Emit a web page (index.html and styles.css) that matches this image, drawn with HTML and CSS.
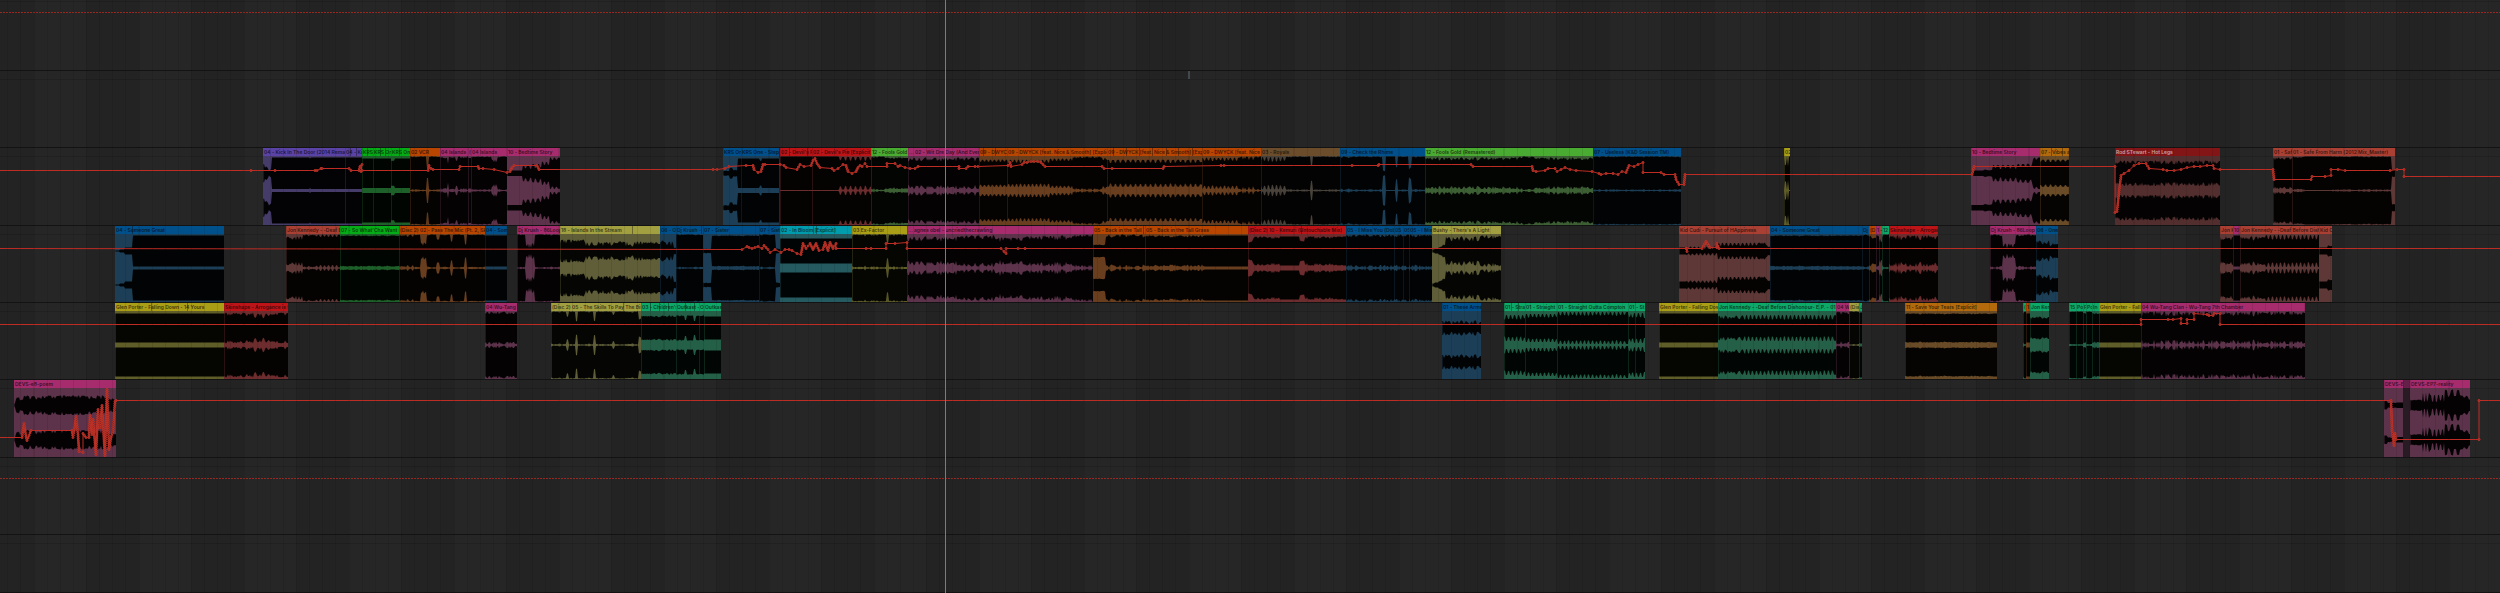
FILE: index.html
```html
<!DOCTYPE html>
<html lang="en">
<head>
    <meta charset="UTF-8">
    <title>Arrangement</title>
    <link rel="stylesheet" href="styles.css">
</head>
<body>

    <main class="arrangement" id="arrangement"></main>

    <script src="script.js"></script>

</body>
</html>
```

FILE: styles.css
```css
body {
    margin: 0;
    background-color: #262626;
    font-family: Inter, "Liberation Sans", sans-serif;
    overflow: hidden;
}

.arrangement {
    position: relative;
    display: flex;
    flex-direction: column;
    min-height: 100vh;
    background-image: linear-gradient(90deg, #232323 50%, #262626 50%);
    background-size: 105px 100%;
    background-position: 86px 0;
}

/* beat lines, drawn over lanes and clips */
.arrangement::after {
    content: "";
    position: absolute;
    inset: 0;
    background-image: repeating-linear-gradient(90deg, rgba(0, 0, 0, 0.09) 0 1px, transparent 1px 12.5%);
    background-size: 105px 100%;
    background-position: 86px 0;
    pointer-events: none;
}

.lane {
    position: relative;
    box-sizing: border-box;
    height: 77px;
    border-bottom: 1px solid #131313;
    background-image: linear-gradient(rgba(0, 0, 0, 0.14), rgba(0, 0, 0, 0.14));
    background-size: 100% 1px;
    background-position: 0 8px;
    background-repeat: no-repeat;
}

.lane.top {
    height: 71px;
    background-position: 0 1px;
}

.lane.main {
    height: 78px;
}

.lane.last {
    height: 58px;
}

.clip {
    position: absolute;
    top: 0;
    bottom: 0;
    display: flex;
    flex-direction: column;
    overflow: hidden;
}

.clip-name {
    position: relative;
    height: 8px;
    padding-left: 1px;
    background-color: var(--head);
    color: rgba(0, 0, 0, 0.68);
    font-size: 5px;
    font-weight: 600;
    line-height: 8px;
    white-space: nowrap;
    overflow: hidden;
}

.clip + .clip .clip-name {
    box-shadow: inset 1px 0 rgba(0, 0, 0, 0.12);
}

.slice {
    position: absolute;
    top: 0;
    width: 1px;
    height: 8px;
    background-color: rgba(0, 0, 0, 0.35);
}

.clip-wave {
    display: block;
    width: 100%;
    flex: 1;
    min-height: 0;
    background-color: var(--wave);
}

.clip-wave path {
    fill: #000;
    fill-opacity: 0.95;
}

.clip-edge {
    position: absolute;
    top: 8px;
    bottom: 0;
    left: 0;
    width: 1px;
    background-color: var(--wave);
    opacity: 0.35;
}

.violet { --head: #5a43a5; --wave: #453c69; }
.green { --head: #06ac17; --wave: #1e6029; }
.lime { --head: #4aab33; --wave: #3d5f34; }
.orange { --head: #b84500; --wave: #683e1e; }
.magenta { --head: #a62c6e; --wave: #5d334b; }
.blue { --head: #00508c; --wave: #1c3f57; }
.red { --head: #bd1418; --wave: #6d2c2d; }
.brown { --head: #6c4d2b; --wave: #49423a; }
.yellow { --head: #aa9e16; --wave: #5f5d28; }
.khaki { --head: #a29f40; --wave: #5f5e38; }
.teal { --head: #0ea868; --wave: #236047; }
.cyan { --head: #009cae; --wave: #245a60; }
.salmon { --head: #aa4033; --wave: #5e3836; }
.amber { --head: #b36a0c; --wave: #694b27; }
.crimson { --head: #841517; --wave: #532e2e; }
.dim { --head: #65204a; --wave: #281b23; }

.crimson .clip-name {
    color: #c9a3a0;
}

.automation {
    position: absolute;
    top: 0;
    left: 0;
    width: 100%;
    height: 77px;
    overflow: visible;
}

.automation path {
    fill: none;
    stroke: #bf2c24;
    stroke-width: 1;
}

.automation circle {
    fill: #8a251d;
    stroke: #c63429;
    stroke-width: 1;
}

.automation.off path {
    stroke: #962a23;
    stroke-dasharray: 2 1;
}

.playhead {
    position: absolute;
    top: 0;
    bottom: 0;
    width: 1px;
    background-color: #7c7c7c;
    z-index: 1;
}

.insert-marker {
    position: absolute;
    top: 0;
    width: 2px;
    height: 8px;
    background-color: #465156;
}
```

FILE: script.js
```js
const SPAN = 2500;
const WAVE_HEIGHT = 68;

// clip: [start, end, colour, name, wave, slices]
// wave: "x:gap:jitter:period" steps, gap is the room left outside the peaks
const lanes = [
    { type: 'top', off: true, line: '0,12 2500,12' },
    { type: '', marker: 1188 },
    {
        type: 'main',
        line: '0,22 251,22 275,22 315,22 317,22 321,20 322,20 349,20 351,22 359,22 360,18 362,16 361,23 362,22 428,22 429,17 431,20 433,21 459,21 460,18 478,18 479,20 483,20 494,21 507,24 510,23 512,19 514,17 537,17 539,21 713,21 717,21 725,20 729,18 746,17 753,17 754,21 758,24 761,23 763,16 765,16 780,16 784,17 786,19 797,21 800,16 804,18 811,17 813,12 815,10 817,15 820,19 832,20 834,22 838,20 843,16 846,17 848,23 852,25 856,23 858,19 860,17 862,18 865,15 867,18 887,18 887,15 895,15 898,18 900,17 905,19 910,20 915,20 918,18 959,18 959,20 966,20 968,18 975,18 978,18 1008,17 1010,14 1011,18 1022,16 1024,14 1027,14 1031,13 1034,13 1038,13 1041,14 1045,18 1102,18 1104,20 1112,20 1163,20 1164,18 1221,17 1224,17 1352,17 1378,17 1379,16 1471,16 1473,18 1532,18 1533,22 1536,23 1545,22 1548,20 1555,20 1557,23 1561,21 1565,19 1570,21 1576,22 1592,23 1599,25 1601,26 1606,25 1613,25 1618,26 1622,23 1626,24 1629,17 1634,18 1638,16 1643,14 1643,24 1661,24 1664,26 1675,26 1676,31 1679,36 1684,36 1685,26 1972,26 1974,18 2115,18 2115,64 2117,63 2119,44 2121,27 2124,25 2129,22 2134,17 2139,15 2146,15 2149,20 2163,21 2167,22 2174,22 2181,21 2187,19 2194,18 2200,18 2207,17 2213,17 2214,20 2220,21 2273,21 2274,31 2311,31 2312,28 2325,28 2331,27 2331,21 2338,21 2345,22 2390,22 2397,21 2404,21 2404,28 2500,28',
        clips: [
            [263, 345, 'violet', '04 - Kick In The Door (2014 Remaster)', '263:5:3 265:10:4 269:12:5 272:1:0 310:2:0 311:1:0'],
            [345, 362, 'violet', '04 - Kick', '345:1:0', [350, 356]],
            [362, 373, 'green', 'KRS', '362:2:0', [367]],
            [373, 391, 'green', 'KRS One', '373:2:0', [380, 385]],
            [391, 410, 'green', 'KRS One', '391:4:3 395:2:0', [399]],
            [410, 440, 'orange', '02 VCR', '410:0:1 427:11:1 429:0:1'],
            [440, 468, 'magenta', '04 Islands', '440:0:2 448:7:1 449:0:2 456:4:1 458:0:2'],
            [468, 471, 'magenta', '(', '468:1:1'],
            [471, 507, 'magenta', '04 Islands', '471:0:1 492:2:4 498:0:1'],
            [507, 560, 'magenta', '10 - Bedtime Story', '507:14:0 523:8:5:5 533:7:5:5 542:5:4:4 550:1:3:4'],
            [723, 741, 'blue', 'KRS One', '723:14:1 730:11:1 733:13:1 738:2:0'],
            [741, 779, 'blue', 'KRS One - Step', '741:2:0 760:4:1 762:2:0'],
            [780, 812, 'red', "02 - Devil's P", '780:0:0', [789, 807]],
            [812, 871, 'red', "02 - Devil's Pie [Explicit]", '812:0:0 839:0:5:5'],
            [871, 908, 'lime', '12 - Fools Gold', '871:0:2 885:1:2'],
            [908, 979, 'magenta', '... 02 - Wit Dre Day (And Everybody)', '908:1:4', [945]],
            [979, 1007, 'orange', '09 - DWYCK', '979:3:3:4', [983, 995]],
            [1007, 1107, 'orange', '09 - DWYCK [feat. Nice & Smooth] [Explicit]', '1007:3:4:4 1050:2:3:4 1073:0:2 1103:1:3'],
            [1107, 1202, 'orange', '09 - DWYCK [feat. Nice & Smooth] [Exp', '1107:3:4:5', [1113, 1126, 1139, 1152, 1166, 1178, 1192]],
            [1202, 1261, 'orange', '09 - DWYCK [feat. Nice &', '1202:1:4:4 1240:0:4 1255:0:2'],
            [1261, 1340, 'brown', '03 - Royals', '1261:0:6:4 1287:0:1 1311:9:1 1313:0:1'],
            [1340, 1425, 'blue', '09 - Check the Rhime', '1340:0:2 1350:0:1 1383:13:2 1386:0:0 1396:9:2 1398:0:1 1409:11:2 1412:0:1'],
            [1425, 1593, 'lime', '12 - Fools Gold (Remastered)', '1425:1:3 1520:0:2 1535:1:3'],
            [1593, 1681, 'blue', '07 - Useless (K&D Session TM)', '1593:0:1'],
            [1784, 1790, 'yellow', '02', '1784:0:0 1785:8:2 1787:0:0 1788:8:2 1789:0:0'],
            [1971, 2040, 'magenta', '10 - Bedtime Story', '1971:14:0 1984:13:1 1993:8:5:5 2018:7:4:5 2033:1:3:4'],
            [2040, 2069, 'amber', '07 - Vibes a', '2040:3:3:5', [2051, 2062]],
            [2115, 2220, 'crimson', 'Rod STewart - Hot Legs', '2115:4:4'],
            [2273, 2292, 'salmon', '01 - Saf', '2273:1:3'],
            [2292, 2395, 'salmon', '01 - Safe From Harm (2012 Mix_Master)', '2292:0:2 2305:0:0 2333:0:1 2392:13:1']
        ]
    },
    {
        type: '',
        line: '0,22 742,23 747,20 749,21 752,22 755,21 758,20 762,22 764,19 768,23 770,26 775,23 781,26 785,23 789,23 792,24 797,27 801,28 803,17 806,22 810,17 813,23 816,17 819,24 823,23 825,16 828,24 830,16 833,22 836,17 836,22 866,22 871,22 886,22 886,17 895,17 907,16 907,22 1001,22 1004,25 1006,27 1006,22 1018,22 1025,22 1686,22 1687,25 1687,22 1702,22 1706,15 1710,21 1717,21 1717,17 1719,22 2500,22',
        clips: [
            [115, 224, 'blue', '04 - Someone Great', '115:16:0 120:15:0 125:13:0 133:1:0', [132]],
            [286, 340, 'salmon', 'Jon Kennedy - -Deaf B', '286:2:4 303:0:2 315:0:3:4'],
            [340, 399, 'green', "07 - So What'Cha Want (", '340:1:1'],
            [399, 485, 'orange', '(Disc 2) 02 - Pass The Mic (Pt. 2, Skills)', '399:0:3 414:0:1 421:8:5 427:0:1 437:4:2 440:0:1 451:6:2 453:0:1 465:9:2 467:0:1'],
            [485, 507, 'blue', '04 - Som', '485:1:0'],
            [517, 560, 'magenta', 'Dj Krush - 86Loop', '517:0:1 526:9:5 535:0:1'],
            [560, 660, 'khaki', '18 - Islands In the Stream', '560:5:4 585:7:5 645:7:3', [632]],
            [660, 676, 'blue', '06 - O', '660:6:3 665:7:5 674:12:2'],
            [676, 703, 'blue', 'Dj Krush - ', '676:0:1', [701]],
            [703, 759, 'blue', '07 - Sister', '703:14:1 712:1:1'],
            [759, 780, 'blue', '07 - Sist', '759:0:1 776:14:1'],
            [780, 852, 'cyan', '02 - In Bloom [Explicit]', '780:4:0', [813, 816]],
            [852, 907, 'yellow', '03 Ex-Factor', '852:0:2 887:9:2 889:0:2'],
            [907, 1093, 'magenta', '... agnes obel - uncriedthecrawling', '907:2:5 960:1:4 995:3:5 1025:1:5 1073:0:3', [945]],
            [1093, 1145, 'orange', '05 - Back in the Tall', '1093:10:1 1106:0:3', [1143]],
            [1145, 1248, 'orange', '05 - Back in the Tall Grass', '1145:1:2 1205:1:0'],
            [1248, 1346, 'red', '(Disc 2) 10 - Kemuri (Untouchable Mix)', '1248:7:2 1253:2:3 1280:2:0 1300:6:2 1305:2:3 1333:2:1', [1301]],
            [1346, 1394, 'blue', '05 - I Miss You (Dob', '1346:0:3'],
            [1394, 1403, 'blue', '05', '1394:0:3'],
            [1403, 1409, 'blue', '05', '1403:0:3'],
            [1409, 1432, 'blue', '05 - I Mis', '1409:0:3'],
            [1432, 1501, 'khaki', "Bushy - Thers's A Light", '1432:15:0 1435:14:0 1439:12:1 1443:10:1 1446:2:5 1480:1:4'],
            [1679, 1770, 'salmon', 'Kid Cudi - Pursuit of HAppiness', '1679:13:0 1687:12:3:4 1718:8:4:4 1760:8:4 1768:12:1'],
            [1770, 1862, 'blue', '04 - Someone Great', '1770:1:1'],
            [1862, 1869, 'blue', 'Dj', '1862:0:2'],
            [1869, 1876, 'orange', '(D', '1869:1:4'],
            [1876, 1879, 'magenta', '1', '1876:0:2'],
            [1879, 1882, 'salmon', '-', '1879:4:4'],
            [1882, 1889, 'teal', '12', '1882:0:3'],
            [1889, 1938, 'red', 'Skinshape - Arrogar', '1889:1:5'],
            [1990, 2036, 'magenta', 'Dj Krush - 86Loop', '1990:0:2 2003:9:5 2016:0:2'],
            [2036, 2058, 'blue', '06 - One', '2036:6:5 2050:8:5'],
            [2220, 2233, 'salmon', 'Jon K', '2220:2:5'],
            [2233, 2240, 'magenta', '10', '2233:1:0'],
            [2240, 2319, 'salmon', 'Jon Kennedy - -Deaf Before Dish', '2240:2:4 2266:0:6:4'],
            [2319, 2332, 'salmon', 'Kid C', '2319:13:0 2328:11:1']
        ]
    },
    {
        type: '',
        line: '0,21 2141,21 2141,16 2168,16 2173,16 2181,15 2181,20 2187,20 2187,16 2194,16 2194,10 2207,11 2209,12 2213,12 2214,10 2220,10 2220,21 2500,21',
        clips: [
            [115, 224, 'yellow', 'Glen Porter - Falling Down - 14 Yours', '115:2:0', [151, 187]],
            [224, 288, 'red', 'Skinshape - Arrogance is t', '224:1:4 255:2:5 275:1:4'],
            [485, 517, 'magenta', '04 Wu-Tang', '485:0:3'],
            [551, 641, 'khaki', '(Disc 2) 05 - The Skills To Pay The Bills', '551:0:1 567:5:1 569:0:1 576:9:2 578:0:1 594:7:3 596:0:1 613:3:1 615:0:1 639:7:2', [623]],
            [641, 676, 'teal', "03 - Children's", '641:4:2', [650, 659, 668]],
            [676, 699, 'teal', 'Outkast - ', '676:4:1 685:8:2 687:4:1 694:9:1 696:4:1', [685, 694]],
            [699, 704, 'teal', 'O', '699:4:1'],
            [704, 721, 'teal', 'Outkas', '704:5:0'],
            [1442, 1481, 'blue', '01 - These Arms', '1442:9:4'],
            [1504, 1525, 'teal', '01 - Stra', '1504:3:6:4', [1511, 1518]],
            [1525, 1557, 'teal', '01 - Straight', '1525:2:5:4'],
            [1557, 1628, 'teal', '01 - Straight Outta Compton', '1557:0:5:4'],
            [1628, 1635, 'teal', '01', '1628:1:6:3'],
            [1635, 1645, 'teal', '- St', '1635:1:6:4'],
            [1659, 1718, 'yellow', 'Glen Porter - Falling Dow', '1659:2:0'],
            [1718, 1836, 'teal', 'Jon Kennedy - -Deaf Before Dishonour- E.P. - 01 S', '1718:4:4 1742:3:6:4'],
            [1836, 1849, 'magenta', '04 W', '1836:0:4'],
            [1849, 1859, 'khaki', '(Dis', '1849:0:1'],
            [1859, 1862, 'teal', 'J', '1859:1:1'],
            [1905, 1997, 'amber', '11 - Save Your Tears [Explicit]', '1905:2:1'],
            [2023, 2026, 'teal', '(', '2023:0:3'],
            [2026, 2030, 'orange', '1', '2026:2:0'],
            [2030, 2049, 'teal', 'Jon Ken', '2030:5:3'],
            [2069, 2076, 'teal', '15', '2069:0:1'],
            [2076, 2083, 'teal', 'Po', '2076:0:2'],
            [2083, 2086, 'teal', 'F', '2083:1:2'],
            [2086, 2092, 'teal', 'Po', '2086:0:1'],
            [2092, 2099, 'teal', 'In', '2092:1:3'],
            [2099, 2141, 'yellow', 'Glen Porter - Fall', '2099:2:0'],
            [2141, 2305, 'magenta', '04 Wu-Tang Clan - Wu-Tang 7th Chamber', '2141:0:5']
        ]
    },
    {
        type: 'main',
        line: '0,57 22,57 24,43 26,56 27,60 29,55 31,50 72,50 73,57 76,36 78,54 79,71 83,72 83,53 86,57 89,57 90,35 92,54 93,39 96,74 98,29 99,47 100,47 102,25 103,44 105,75 107,9 109,69 111,57 113,51 115,21 116,20 2391,20 2392,49 2394,65 2395,53 2396,59 2479,59 2479,20 2500,20',
        clips: [
            [14, 116, 'magenta', 'DEVS-e8-poem', '14:14:2 16:8:3 20:10:3 24:7:4 110:10:4'],
            [2384, 2403, 'magenta', 'DEVS-E', '2384:12:1 2388:14:1 2397:14:0'],
            [2403, 2410, 'dim', '', ''],
            [2410, 2470, 'magenta', 'DEVS-EP7-reality', '2410:11:1 2422:2:12:3 2430:5:9:4 2445:0:9:6 2463:7:4']
        ]
    },
    { type: '', off: true, line: '0,20 2500,20' },
    { type: 'last' }
];

function noise(x) {
    const n = Math.sin(x * 12.9898) * 43758.5453;
    return n - Math.floor(n);
}

function gapAt(steps, x) {
    let step = steps[0];
    for (const s of steps) {
        if (s[0] <= x) step = s;
    }
    const [, gap, jitter, period] = step;
    if (period) {
        const phase = (x % period) / period;
        return gap + jitter * (phase < 0.35 ? 1 : 0.25) * (0.7 + 0.3 * noise(x));
    }
    return gap + jitter * Math.pow(noise(x), 1.6) + 0.4;
}

// black peaks of the left and right channel, one above the other
function wavePath(start, end, wave) {
    if (!wave) return '';
    const steps = wave.split(' ').map(s => s.split(':').map(Number));
    const half = WAVE_HEIGHT / 4;
    let path = '';
    [half, half * 3].forEach(mid => {
        const upper = [];
        const lower = [];
        for (let x = start; x <= end; x++) {
            const gap = Math.min(gapAt(steps, Math.min(x, end - 1)), half - 0.3);
            const size = half - gap;
            upper.push(`${x - start},${(mid - size).toFixed(1)}`);
            lower.unshift(`${x - start},${(mid + size).toFixed(1)}`);
        }
        path += 'M' + upper.concat(lower).join(' L') + 'Z ';
    });
    return path;
}

function clipHtml([start, end, colour, name, wave, slices = []]) {
    const width = end - start;
    const place = `left: ${start / SPAN * 100}%; width: ${width / SPAN * 100}%`;
    const label = name.replace(/&/g, '&amp;');
    const marks = slices.map(x => `<i class="slice" style="left: ${(x - start) / width * 100}%"></i>`).join('');
    return `<div class="clip ${colour}" style="${place}">
        <div class="clip-name">${label}${marks}</div>
        <svg class="clip-wave" viewBox="0 0 ${width} ${WAVE_HEIGHT}" preserveAspectRatio="none">
            <path d="${wavePath(start, end, wave)}"/>
        </svg>
        <div class="clip-edge"></div>
    </div>`;
}

function automationHtml(line, off) {
    const points = line.split(' ').map(p => p.split(',').map(Number));
    const d = 'M' + points.map(([x, y]) => `${x},${y + 0.5}`).join(' L');
    let dots = '';
    points.forEach(([x, y], i) => {
        if (x === 0 || x === SPAN) return;
        dots += `<circle cx="${x}" cy="${y + 0.5}" r="1"/>`;
        // quick moves are recorded as a run of breakpoints
        const [px, py] = points[i - 1];
        const dx = x - px;
        const dy = y - py;
        if (dx > 0 && dx <= 4 && Math.abs(dy) > 3) {
            const count = Math.floor(Math.abs(dy) / 2);
            for (let n = 1; n < count; n++) {
                dots += `<circle cx="${px + dx * n / count}" cy="${py + dy * n / count + 0.5}" r="1"/>`;
            }
        }
    });
    return `<svg class="automation ${off ? 'off' : ''}" viewBox="0 0 ${SPAN} 77" preserveAspectRatio="none">
        <path d="${d}"/>${dots}
    </svg>`;
}

const html = lanes.map(lane => `<section class="lane ${lane.type}">
    ${(lane.clips || []).map(clipHtml).join('')}
    ${lane.line ? automationHtml(lane.line, lane.off) : ''}
    ${lane.marker ? `<div class="insert-marker" style="left: ${lane.marker / SPAN * 100}%"></div>` : ''}
</section>`).join('');

document.getElementById('arrangement').innerHTML = html +
    `<div class="playhead" style="left: ${945 / SPAN * 100}%"></div>`;
```
